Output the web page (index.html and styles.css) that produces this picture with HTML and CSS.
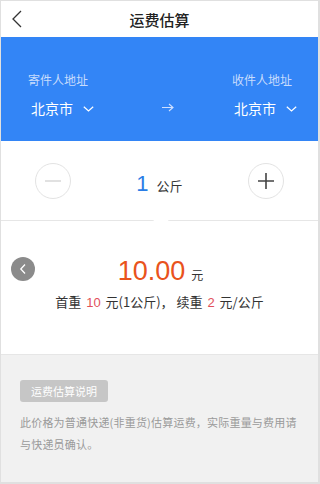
FILE: index.html
```html
<!DOCTYPE html>
<html lang="zh-CN">
<head>
<meta charset="utf-8">
<link rel="stylesheet" href="styles.css">
</head>
<body>
<div class="app">
  <header class="topbar">
    <svg class="back" width="12" height="20" viewBox="0 0 12 20"><path d="M10 2 L2 10 L10 18" fill="none" stroke="#333" stroke-width="1.3"/></svg>
    <h1 class="title">运费估算</h1>
  </header>
  <section class="route">
    <div class="place place-left">
      <div class="label">寄件人地址</div>
      <div class="city">北京市 <svg class="chev" width="11" height="6" viewBox="0 0 11 6"><path d="M0.8 0.8 L5.5 5 L10.2 0.8" fill="none" stroke="#fff" stroke-width="1.2"/></svg></div>
    </div>
    <div class="arrow"><svg width="12" height="9" viewBox="0 0 12 9"><path d="M0 4.5 H11 M7 1 L11 4.5 L7 8" fill="none" stroke="#cfe0ff" stroke-width="1.1"/></svg></div>
    <div class="place place-right">
      <div class="label">收件人地址</div>
      <div class="city">北京市 <svg class="chev" width="11" height="6" viewBox="0 0 11 6"><path d="M0.8 0.8 L5.5 5 L10.2 0.8" fill="none" stroke="#fff" stroke-width="1.2"/></svg></div>
    </div>
  </section>
  <section class="weight">
    <div class="circle minus"><svg width="18" height="18" viewBox="0 0 18 18"><path d="M1 9 H17" stroke="#d4d4d4" stroke-width="1.4"/></svg></div>
    <div class="amount"><span class="num">1</span><span class="unit">公斤</span></div>
    <div class="circle plus"><svg width="18" height="18" viewBox="0 0 18 18"><path d="M1 9 H17 M9 1 V17" stroke="#444" stroke-width="1.6"/></svg></div>
    <div class="notch"></div>
  </section>
  <section class="result">
    <div class="prev"><svg width="8" height="12" viewBox="0 0 8 12"><path d="M6 1.5 L1.8 6 L6 10.5" fill="none" stroke="#fff" stroke-width="1.3"/></svg></div>
    <div class="price"><span class="big">10.00</span><span class="yuan">元</span></div>
    <div class="detail">首重 <span class="red">10</span> 元(1公斤)， 续重 <span class="red">2</span> 元/公斤</div>
  </section>
  <section class="notes">
    <div class="tag">运费估算说明</div>
    <p class="desc">此价格为普通快递(非重货)估算运费，实际重量与费用请与快递员确认。</p>
  </section>
</div>
</body>
</html>
```
FILE: styles.css
```css
* { box-sizing: border-box; }
html, body { margin: 0; padding: 0; }
body {
  width: 320px;
  height: 484px;
  overflow: hidden;
  font-family: "Noto Sans CJK SC", "Noto Sans", sans-serif;
  background: #fff;
}
.app {
  width: 320px;
  height: 484px;
  border: 1px solid #e0e0e0;
  border-right-width: 2px;
  border-bottom-width: 2px;
  display: flex;
  flex-direction: column;
  background: #f1f1f1;
}
.topbar {
  height: 36px;
  background: #fff;
  position: relative;
  display: flex;
  align-items: center;
  justify-content: center;
}
.back { position: absolute; left: 10px; top: 8px; }
.title {
  margin: 0;
  font-size: 15px;
  font-weight: 500;
  color: #222;
}
.route {
  height: 104px;
  background: #3385f6;
  display: flex;
  justify-content: space-between;
  align-items: flex-start;
  padding: 34px 21px 0 27px;
}
.place { display: flex; flex-direction: column; }
.place-right { align-items: flex-end; }
.label {
  font-size: 12px;
  line-height: 18px;
  color: #c8dcfc;
}
.place-right .label { margin-right: 5px; }
.city {
  margin-top: 9px;
  font-size: 14px;
  line-height: 20px;
  color: #fff;
  display: flex;
  align-items: center;
  gap: 10px;
}
.place-left .city { margin-left: 3px; }
.chev { margin-top: 2px; }
.arrow { display: flex; margin-top: 32px; margin-left: 10px; }
.weight {
  height: 80px;
  background: #fff;
  position: relative;
  display: flex;
  align-items: center;
  justify-content: space-between;
  padding: 0 34px 0 34px;
  border-bottom: 1px solid #e6e6e6;
}
.circle {
  width: 36px;
  height: 36px;
  border-radius: 50%;
  border: 1px solid #e3e3e3;
  display: flex;
  align-items: center;
  justify-content: center;
}
.amount { display: flex; align-items: baseline; margin-top: 6px; }
.num {
  font-family: "Liberation Sans", sans-serif;
  font-size: 22px;
  color: #2a7de6;
}
.unit { font-size: 13px; color: #333; margin-left: 8px; }
.notch {
  position: absolute;
  left: 154px;
  bottom: -7px;
  width: 12px;
  height: 12px;
  background: #fff;
  border-right: 1px solid #dedede;
  border-bottom: 1px solid #dedede;
  transform: rotate(45deg);
}
.result {
  height: 134px;
  background: #fff;
  position: relative;
  display: flex;
  flex-direction: column;
  align-items: center;
  padding-top: 34px;
  border-bottom: 1px solid #e6e6e6;
}
.prev {
  position: absolute;
  left: 10px;
  top: 36px;
  width: 24px;
  height: 24px;
  border-radius: 50%;
  background: #8b8b8b;
  display: flex;
  align-items: center;
  justify-content: center;
}
.price { display: flex; align-items: baseline; margin-left: 2px; }
.big {
  font-family: "Liberation Sans", sans-serif;
  font-size: 27px;
  line-height: 32px;
  color: #e9531c;
}
.yuan { font-size: 12px; color: #333; margin-left: 6px; }
.detail {
  margin-top: 5px;
  font-size: 13px;
  line-height: 20px;
  color: #333;
}
.red { color: #e2505a; font-family: "Liberation Sans", sans-serif; margin: 0 2px; }
.notes {
  flex: 1;
  background: #f1f1f1;
  padding: 22px 19px 0 19px;
}
.tag {
  display: inline-block;
  background: #c6c6c6;
  color: #fff;
  font-size: 11px;
  line-height: 22px;
  padding: 0 11px;
  border-radius: 3px;
}
.desc {
  margin: 9px 0 0 0;
  font-size: 11px;
  line-height: 22px;
  letter-spacing: 0.2px;
  color: #9a9a9a;
}
```
